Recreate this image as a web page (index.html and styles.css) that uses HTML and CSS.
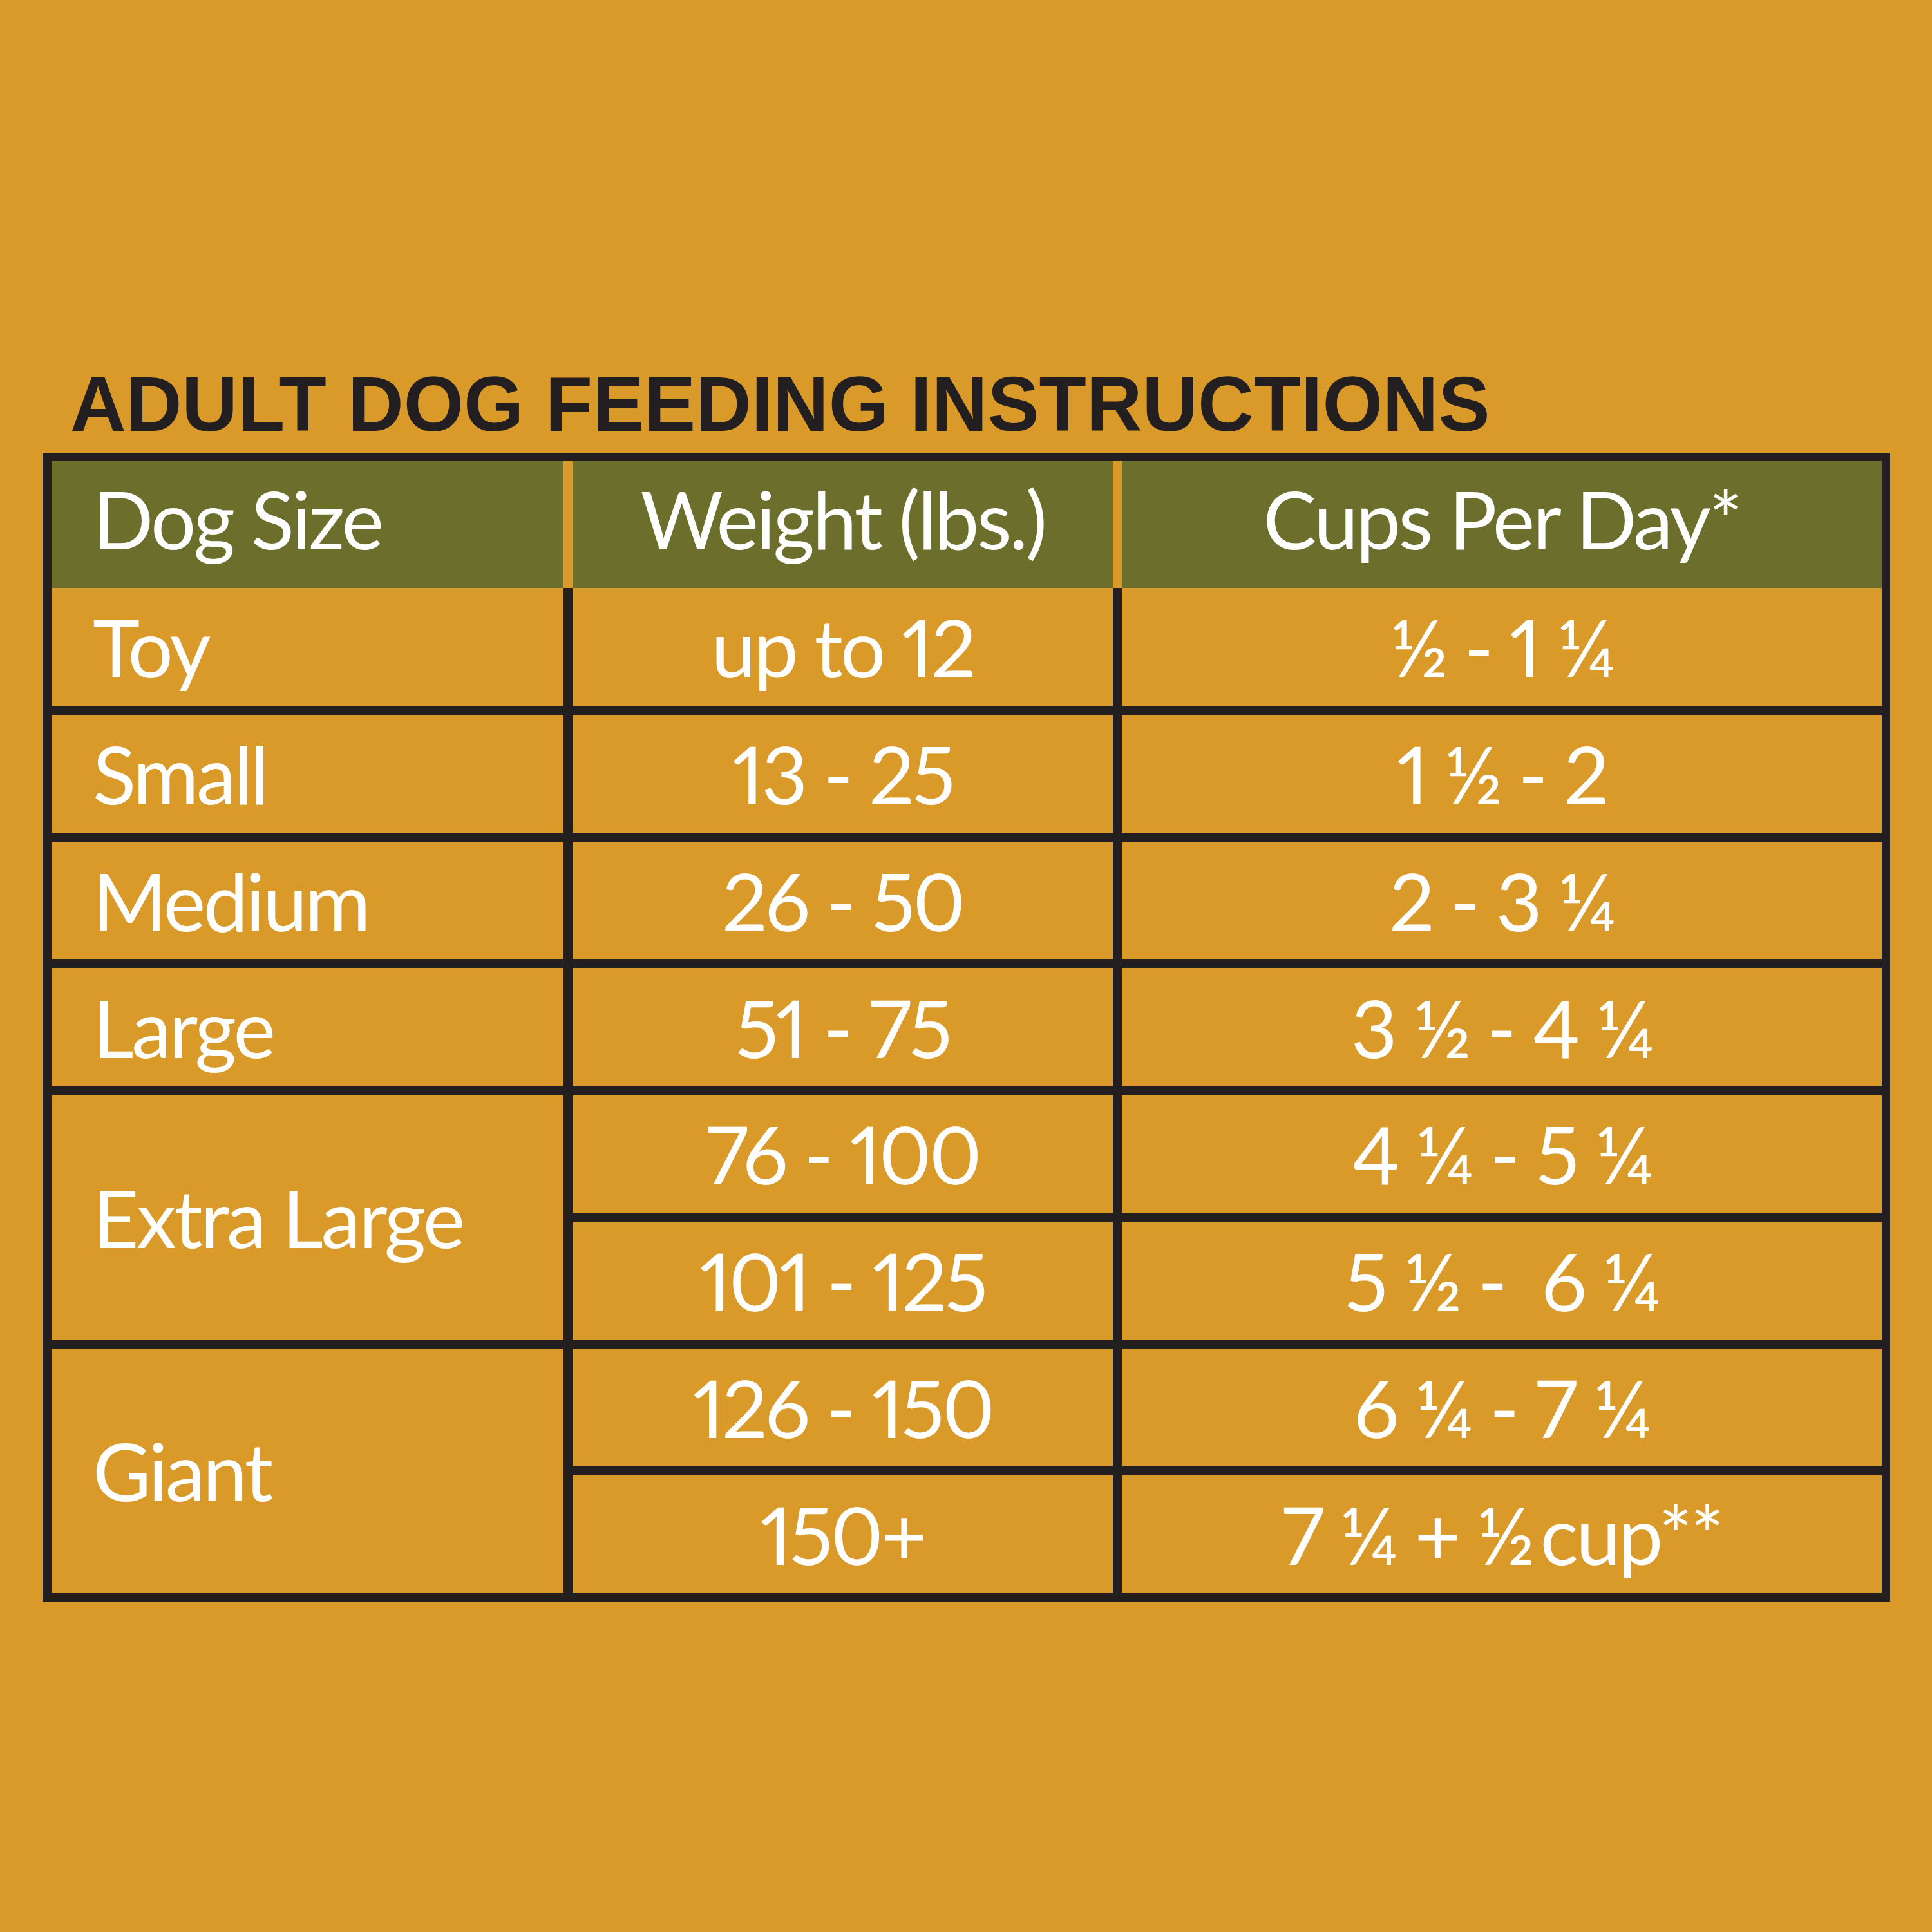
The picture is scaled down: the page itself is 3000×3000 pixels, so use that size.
FILE: index.html
```html
<!DOCTYPE html>
<html lang="en">
<head>
<meta charset="utf-8">
<title>Adult Dog Feeding Instructions</title>
<link rel="stylesheet" href="styles.css">
</head>
<body>
<main class="page">
  <h1 class="title">ADULT DOG FEEDING INSTRUCTIONS</h1>
  <div class="table">
    <div class="head">
      <div class="hcell left">Dog Size</div>
      <div class="hcell">Weight (lbs.)</div>
      <div class="hcell">Cups Per Day*</div>
    </div>
    <div class="body">
      <div class="cell left">Toy</div>
      <div class="cell">up to 12</div>
      <div class="cell">½ - 1 ¼</div>

      <div class="cell left">Small</div>
      <div class="cell">13 - 25</div>
      <div class="cell">1 ½ - 2</div>

      <div class="cell left">Medium</div>
      <div class="cell">26 - 50</div>
      <div class="cell">2 - 3 ¼</div>

      <div class="cell left">Large</div>
      <div class="cell">51 - 75</div>
      <div class="cell">3 ½ - 4 ¼</div>

      <div class="cell left span2">Extra Large</div>
      <div class="cell">76 - 100</div>
      <div class="cell">4 ¼ - 5 ¼</div>
      <div class="cell">101 - 125</div>
      <div class="cell">5 ½ -&nbsp; 6 ¼</div>

      <div class="cell left span2">Giant</div>
      <div class="cell">126 - 150</div>
      <div class="cell">6 ¼ - 7 ¼</div>
      <div class="cell">150+</div>
      <div class="cell">7 ¼ + ½&thinsp;cup**</div>
    </div>
  </div>
</main>
</body>
</html>
```

FILE: styles.css
```css
html, body {
  margin: 0;
  padding: 0;
}

body {
  background: #d99a29;
  width: 3000px;
  height: 3000px;
}

.page {
  padding: 567px 0 0 66px;
}

.title {
  margin: 0 0 16px 43px;
  font-family: "Liberation Sans", Arial, sans-serif;
  font-weight: 700;
  font-size: 120px;
  line-height: 120px;
  letter-spacing: 0;
  color: #231f20;
  white-space: nowrap;
}

.table {
  display: flex;
  flex-direction: column;
  width: fit-content;
  background: #231f20;
  padding: 13px 13px 14px 14px;
}

.head,
.body {
  display: grid;
  grid-template-columns: 795px 839px 1180px;
  column-gap: 14px;
}

.head {
  height: 197px;
  background: #d99a29;
}

.body {
  height: 1560px;
  grid-template-rows: repeat(8, 1fr);
  row-gap: 14px;
}

.hcell,
.cell {
  display: flex;
  align-items: center;
  justify-content: center;
  font-family: Lato, "Open Sans", sans-serif;
  font-weight: 400;
  font-size: 124px;
  line-height: 1;
  letter-spacing: -3.5px;
  word-spacing: 0;
  font-variant-numeric: proportional-nums;
  color: #ffffff;
  white-space: pre;
}

.hcell {
  background: #6c6e2b;
  padding-bottom: 20px;
  box-sizing: border-box;
}

.cell {
  background: #d99a29;
}

.left {
  justify-content: flex-start;
  padding-left: 64px;
}

.span2 {
  grid-row: span 2;
}
```
